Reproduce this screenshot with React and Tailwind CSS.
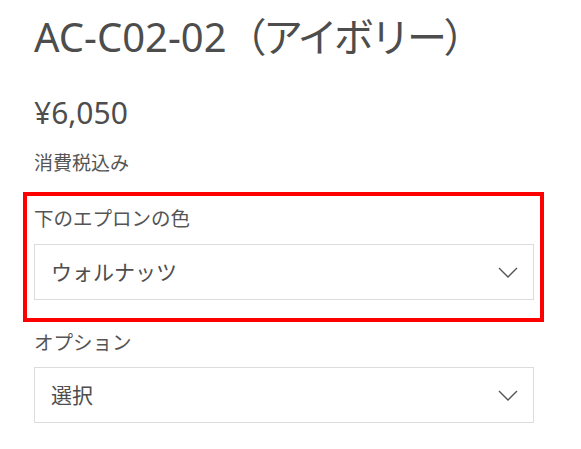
import { useState } from 'react';

const FONT = "font-['Noto_Sans','Noto_Sans_CJK_JP',sans-serif]";

function Chevron() {
  return (
    <svg width="20" height="11" viewBox="0 0 20 11" fill="none" className="shrink-0">
      <path d="M1 1l9 9 9-9" stroke="#555" strokeWidth="1.4" />
    </svg>
  );
}

function SelectBox({ value }) {
  return (
    <div className="flex h-[56px] w-[500px] items-center justify-between border border-[#dcdcdc] bg-white pl-[16px] pr-[15px]">
      <span className="text-[21px] leading-none text-[#4d4d4d]">{value}</span>
      <Chevron />
    </div>
  );
}

export default function App() {
  const [apron] = useState('ウォルナッツ');
  const [option] = useState('選択');

  return (
    <div className={`${FONT} min-h-[449px] bg-white px-[34px] pt-[12px] text-[#4d4d4d]`}>
      <h1 className="text-[40px] font-normal leading-[50px]">
        AC-C02-02<span className="tracking-[-3.5px]">（アイボリー）</span>
      </h1>

      <p className="mt-[31px] text-[30px] leading-[40px]">¥6,050</p>
      <p className="mt-[17px] text-[19px] leading-[26px] text-[#555]">消費税込み</p>

      {/* highlighted variant picker */}
      <div className="ml-[-11px] mt-[16px] w-[521px] border-4 border-[#ff0000] pb-[18px] pl-[7px] pr-[6px] pt-[8px]">
        <p className="text-[19.5px] leading-[30px] text-[#555]">下のエプロンの色</p>
        <div className="mt-[10px]">
          <SelectBox value={apron} />
        </div>
      </div>

      <p className="mt-[6px] text-[19.5px] leading-[30px] text-[#555]">オプション</p>
      <div className="mt-[9px]">
        <SelectBox value={option} />
      </div>
    </div>
  );
}
